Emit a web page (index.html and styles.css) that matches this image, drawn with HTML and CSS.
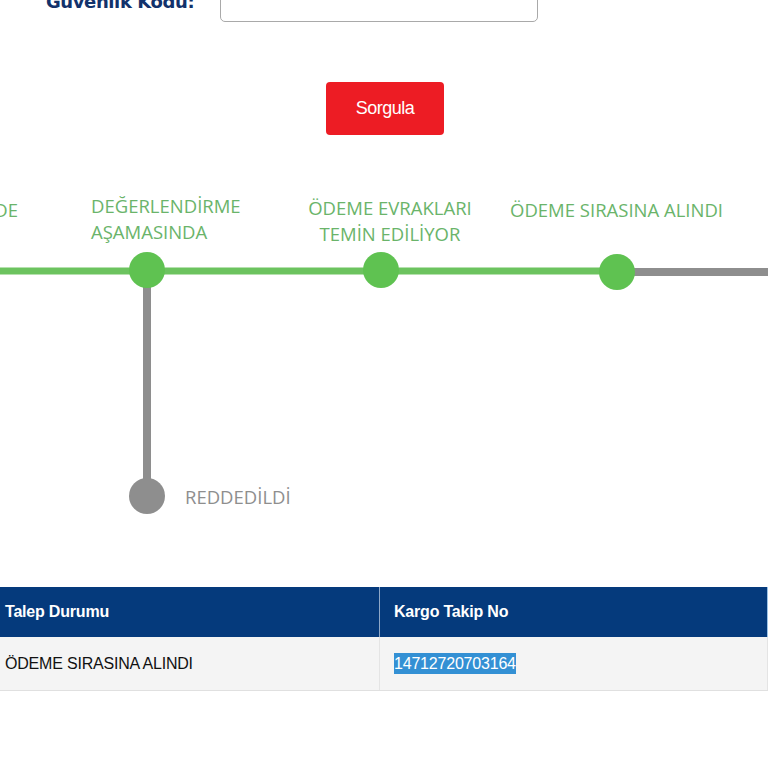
FILE: index.html
```html
<!DOCTYPE html>
<html lang="tr">
<head>
<meta charset="utf-8">
<title>Sorgula</title>
<link rel="stylesheet" href="styles.css">
</head>
<body>
<div class="form-row">
  <label class="form-label" for="kod">Güvenlik Kodu:</label>
  <input class="form-input" id="kod" type="text">
</div>
<div class="btn-row">
  <button class="btn" type="button">Sorgula</button>
</div>
<div class="timeline">
  <svg class="tl-svg" width="768" height="360" viewBox="0 0 768 360">
    <line x1="0" y1="91" x2="618" y2="91" stroke="#6cc35f" stroke-width="7"/>
    <line x1="618" y1="92" x2="768" y2="92" stroke="#8e8e8e" stroke-width="8"/>
    <line x1="147" y1="100" x2="147" y2="316" stroke="#8e8e8e" stroke-width="8"/>
    <circle cx="147" cy="90" r="18" fill="#5fc251"/>
    <circle cx="381" cy="90" r="18" fill="#5fc251"/>
    <circle cx="617" cy="92" r="18" fill="#5fc251"/>
    <circle cx="147" cy="316" r="18" fill="#8e8e8e"/>
  </svg>
  <div class="tl-label lbl-1">İNCELEMEDE</div>
  <div class="tl-label lbl-2">DEĞERLENDİRME<br>AŞAMASINDA</div>
  <div class="tl-label lbl-3">ÖDEME EVRAKLARI<br>TEMİN EDİLİYOR</div>
  <div class="tl-label lbl-4">ÖDEME SIRASINA ALINDI</div>
  <div class="tl-label lbl-rej">REDDEDİLDİ</div>
</div>
<table class="result">
  <thead>
    <tr><th class="col-a">Talep Durumu</th><th class="col-b">Kargo Takip No</th></tr>
  </thead>
  <tbody>
    <tr><td>ÖDEME SIRASINA ALINDI</td><td><span class="sel">14712720703164</span></td></tr>
  </tbody>
</table>
</body>
</html>
```
FILE: styles.css
```css
html, body {
  margin: 0;
  padding: 0;
  background: #ffffff;
  overflow: hidden;
  font-family: "Liberation Sans", Arial, sans-serif;
}
.form-row {
  display: flex;
  align-items: center;
  margin-top: -20px;
  padding-left: 46px;
  height: 42px;
}
.form-label {
  width: 174px;
  font-size: 18px;
  font-weight: bold;
  color: #12326b;
  font-family: "DejaVu Sans", "Liberation Sans", sans-serif;
  letter-spacing: -0.4px;
}
.form-input {
  box-sizing: border-box;
  width: 318px;
  height: 42px;
  border: 1px solid #a9a9a9;
  border-radius: 5px;
  margin: 0;
}
.btn-row {
  display: flex;
  justify-content: center;
  margin-top: 60px;
}
.btn {
  width: 118px;
  height: 53px;
  background: #ed1c24;
  color: #ffffff;
  border: none;
  border-radius: 4px;
  font-family: "Liberation Sans", Arial, sans-serif;
  font-size: 18px;
  letter-spacing: -0.5px;
  margin-left: 2px;
}
.timeline {
  position: relative;
  height: 360px;
  margin-top: 45px;
}
.tl-svg {
  position: absolute;
  left: 0;
  top: 0;
}
.tl-label {
  position: absolute;
  font-family: "Open Sans", sans-serif;
  font-size: 18.5px;
  line-height: 26px;
  color: #6ab46a;
  white-space: nowrap;
}
.lbl-1 { left: -182px; width: 200px; top: 17px; text-align: right; }
.lbl-2 { left: 91px; top: 13px; }
.lbl-3 { left: 290px; width: 200px; top: 15px; text-align: center; }
.lbl-4 { left: 510px; top: 17px; }
.lbl-rej { left: 185px; top: 304px; color: #8e8e8e; }
.result {
  border-collapse: collapse;
  margin-top: 47px;
  margin-left: -9px;
  width: 777px;
  table-layout: fixed;
}
.result th {
  background: #053a7c;
  color: #ffffff;
  height: 50px;
  text-align: left;
  font-size: 16px;
  font-weight: bold;
  padding: 0 0 0 14px;
  letter-spacing: -0.2px;
}
.result .col-a { width: 374px; border-right: 1px solid #8fa8c8; }
.result .col-b { border-right: 1px solid #9cc3e6; }
.result td {
  background: #f4f4f4;
  height: 53px;
  padding: 0 0 0 14px;
  font-size: 16px;
  color: #111111;
  border-right: 1px solid #e4e4e4;
  border-bottom: 1px solid #e0e0e0;
  letter-spacing: -0.2px;
}
.sel {
  background: #3390d4;
  color: #ffffff;
  padding: 2px 0;
}
```
